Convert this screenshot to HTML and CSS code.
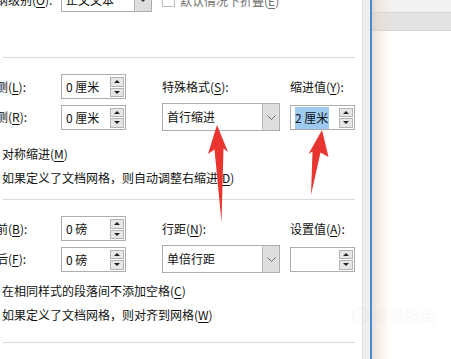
FILE: index.html
```html
<!DOCTYPE html>
<html lang="zh-CN">
<head>
    <meta charset="UTF-8">
    <title>段落</title>
    <link rel="stylesheet" href="styles.css">
</head>
<body>
    <div class="screen">
        <div class="dialog">
            <div class="inner">
                <!-- 常规 -->
                <div class="grid row-top">
                    <span class="label">大纲级别(<u>O</u>):</span>
                    <div class="select short">
                        <span class="value">正文文本</span>
                        <span class="drop tri"></span>
                    </div>
                    <label class="check disabled wide">
                        <span class="box"></span>
                        <span>默认情况下折叠(<u>E</u>)</span>
                    </label>
                </div>

                <div class="sep"></div>

                <!-- 缩进 -->
                <div class="grid rows">
                    <span class="label">左侧(<u>L</u>):</span>
                    <div class="spin">
                        <span class="value">0 厘米</span>
                        <span class="btns"><span class="up"></span><span class="down"></span></span>
                    </div>
                    <span class="label">特殊格式(<u>S</u>):</span>
                    <span class="label">缩进值(<u>Y</u>):</span>

                    <span class="label">右侧(<u>R</u>):</span>
                    <div class="spin">
                        <span class="value">0 厘米</span>
                        <span class="btns"><span class="up"></span><span class="down"></span></span>
                    </div>
                    <div class="select">
                        <span class="value">首行缩进</span>
                        <span class="drop chev">
                            <svg width="9" height="5" viewBox="0 0 9 5"><polyline points="0.5,0.5 4.5,4.5 8.5,0.5" fill="none" stroke="#6b6b6b" stroke-width="1"/></svg>
                        </span>
                    </div>
                    <div class="spin">
                        <span class="value"><span class="hl">2 厘米</span></span>
                        <span class="btns"><span class="up"></span><span class="down"></span></span>
                    </div>
                </div>

                <label class="check line-a">
                    <span class="box"></span>
                    <span>对称缩进(<u>M</u>)</span>
                </label>
                <label class="check line-b">
                    <span class="box"></span>
                    <span>如果定义了文档网格，则自动调整右缩进(<u>D</u>)</span>
                </label>

                <div class="sep sep-mid"></div>

                <!-- 间距 -->
                <div class="grid rows">
                    <span class="label">段前(<u>B</u>):</span>
                    <div class="spin">
                        <span class="value">0 磅</span>
                        <span class="btns"><span class="up"></span><span class="down"></span></span>
                    </div>
                    <span class="label">行距(<u>N</u>):</span>
                    <span class="label">设置值(<u>A</u>):</span>

                    <span class="label">段后(<u>F</u>):</span>
                    <div class="spin">
                        <span class="value">0 磅</span>
                        <span class="btns"><span class="up"></span><span class="down"></span></span>
                    </div>
                    <div class="select">
                        <span class="value">单倍行距</span>
                        <span class="drop chev">
                            <svg width="9" height="5" viewBox="0 0 9 5"><polyline points="0.5,0.5 4.5,4.5 8.5,0.5" fill="none" stroke="#6b6b6b" stroke-width="1"/></svg>
                        </span>
                    </div>
                    <div class="spin">
                        <span class="value"></span>
                        <span class="btns"><span class="up"></span><span class="down"></span></span>
                    </div>
                </div>

                <label class="check line-c">
                    <span class="box"></span>
                    <span>在相同样式的段落间不添加空格(<u>C</u>)</span>
                </label>
                <label class="check line-b">
                    <span class="box"></span>
                    <span>如果定义了文档网格，则对齐到网格(<u>W</u>)</span>
                </label>

                <div class="sep sep-end"></div>
            </div>
        </div>

        <div class="edge"></div>

        <div class="doc">
            <div class="band-a"></div>
            <div class="band-b"></div>
        </div>
    </div>

    <div class="watermark"><span class="logo">S</span>搜狐指南</div>

    <svg class="marks" width="451" height="359" viewBox="0 0 451 359">
        <polygon points="217,125 228,152 223.5,148.5 221.5,222 214.5,149.5 208,154" fill="#e8352f"/>
        <polygon points="322,130 328.5,157 320.5,152.5 311,195 312.5,151.5 308.5,154" fill="#e8352f"/>
    </svg>
</body>
</html>
```

FILE: styles.css
```css
body {
    margin: 0;
    background-color: #fff;
    font-family: "Noto Sans CJK SC", "Noto Sans", sans-serif;
    font-size: 12px;
    color: #111;
    overflow: hidden;
}
u {
    text-decoration-thickness: 1px;
    text-underline-offset: 2px;
}
.screen {
    display: flex;
    height: 359px;
    overflow: hidden;
}
.dialog {
    width: 362px;
    flex: none;
    background-color: #fff;
    overflow: hidden;
}
.inner {
    margin-left: -16px;
    margin-top: -12px;
    width: 378px;
}
.grid {
    display: grid;
    grid-template-columns: 77px 101px 128px 66px;
    align-items: center;
}
.row-top {
    height: 24px;
}
.rows {
    grid-template-rows: 25px 28px;
    row-gap: 4px;
    margin-top: 16px;
}
.label {
    white-space: nowrap;
    line-height: 16px;
}
.sep {
    height: 1px;
    background-color: #dadada;
    margin: 45px 7px 0 19px;
}
.sep-mid {
    margin-top: 12px;
}
.sep-end {
    margin-top: 18px;
}

/* spin box */
.spin {
    display: flex;
    width: 65px;
    height: 25px;
    box-sizing: border-box;
    border: 1px solid #adadad;
    background-color: #fff;
}
.spin .value {
    flex: 1;
    padding-left: 4px;
    line-height: 23px;
    white-space: nowrap;
}
.hl {
    background-color: #9dcaf0;
    padding: 2px 1px 3px 0;
}
.btns {
    display: flex;
    flex-direction: column;
    gap: 1px;
    padding: 2px 1px 1px 0;
}
.up,
.down {
    width: 12px;
    height: 8px;
    background-color: #e6e6e6;
    border: 1px solid #b4b4b4;
    display: flex;
    justify-content: center;
    align-items: center;
}
.up::after,
.down::after {
    content: "";
    border-left: 3px solid transparent;
    border-right: 3px solid transparent;
}
.up::after {
    border-bottom: 3px solid #222;
}
.down::after {
    border-top: 3px solid #222;
}

/* select */
.select {
    display: flex;
    width: 118px;
    height: 28px;
    box-sizing: border-box;
    border: 1px solid #adadad;
    background-color: #fff;
}
.select.short {
    width: 91px;
    height: 24px;
}
.select .value {
    flex: 1;
    padding-left: 4px;
    line-height: 26px;
}
.select.short .value {
    line-height: 22px;
}
.drop {
    width: 16px;
    background-color: #dedede;
    border-left: 1px solid #b9b9b9;
    display: flex;
    justify-content: center;
    align-items: center;
}
.drop.tri::after {
    content: "";
    border-left: 3px solid transparent;
    border-right: 3px solid transparent;
    border-top: 3px solid #333;
}

/* checkbox lines */
.check {
    display: flex;
    align-items: center;
    gap: 5px;
    height: 20px;
    white-space: nowrap;
}
.check .box {
    width: 11px;
    height: 11px;
    border: 1px solid #333;
    background-color: #fff;
    flex: none;
}
.check.wide {
    grid-column: 3 / 5;
}
.check.disabled {
    color: #6e6e6e;
}
.check.disabled .box {
    border-color: #bcbcbc;
}
.line-a {
    margin-top: 12px;
}
.line-b {
    margin-top: 4px;
}
.line-c {
    margin-top: 7px;
}

/* window behind */
.edge {
    width: 7px;
    flex: none;
    background-color: #efefef;
    border-left: 1px solid #e2e2e2;
    border-right: 2px solid #4a89d3;
}
.doc {
    flex: 1;
    position: relative;
    background-color: #fff;
}
.doc::after {
    content: "";
    position: absolute;
    left: 0;
    top: 0;
    bottom: 0;
    width: 18px;
    background: linear-gradient(to right, rgba(205, 200, 200, 0.55), rgba(236, 214, 198, 0.45) 35%, rgba(255, 255, 255, 0));
}
.band-a {
    height: 12px;
    background-color: #f2f2f2;
    border-bottom: 1px solid #d4d4d4;
}
.band-b {
    height: 17px;
    background-color: #e3e3e3;
    border-bottom: 1px solid #d6d6d6;
}

.watermark {
    position: absolute;
    left: 352px;
    top: 303px;
    display: flex;
    align-items: center;
    gap: 3px;
    font-size: 16px;
    color: rgba(200, 200, 200, 0.12);
}
.watermark .logo {
    width: 17px;
    height: 17px;
    border-radius: 50%;
    border: 2px solid rgba(200, 200, 200, 0.12);
    box-sizing: border-box;
    font-size: 11px;
    display: flex;
    justify-content: center;
    align-items: center;
}
.marks {
    position: absolute;
    left: 0;
    top: 0;
    pointer-events: none;
}
```
